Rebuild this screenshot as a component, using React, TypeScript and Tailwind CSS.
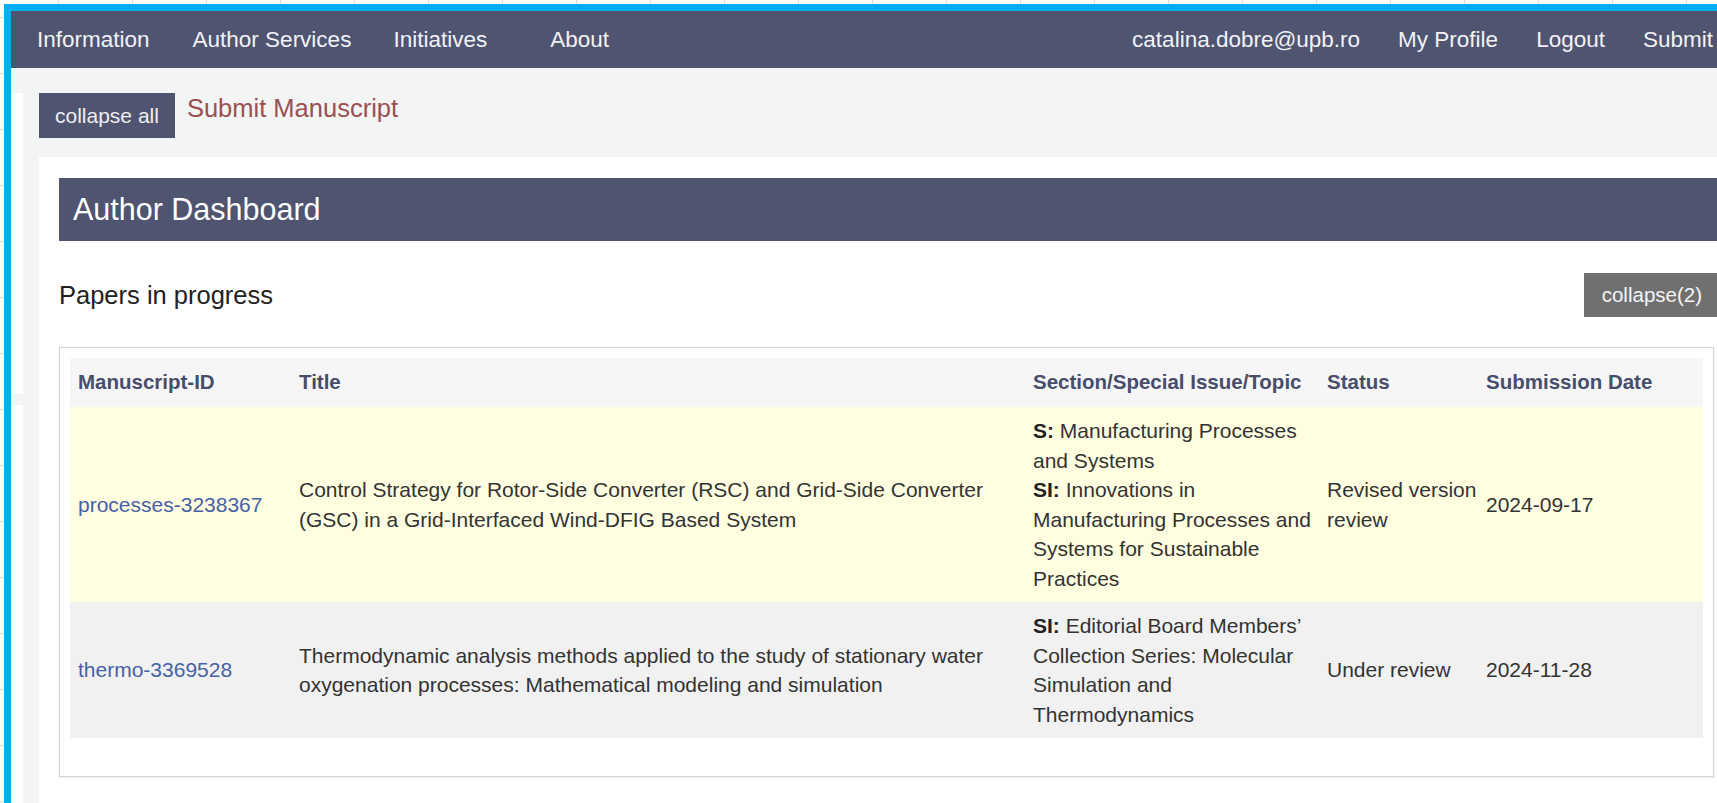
import { FC } from 'react'

const leftLinks = [
  { label: 'Information', cls: '' },
  { label: 'Author Services', cls: 'ml-[43px]' },
  { label: 'Initiatives', cls: 'ml-[42px]' },
  { label: 'About', cls: 'ml-[63px]' },
]

const rightLinks = ['catalina.dobre@upb.ro', 'My Profile', 'Logout', 'Submit']

type Section = { tag: string; lines: string[] }

type Paper = {
  id: string
  title: string[]
  sections: Section[]
  status: string[]
  date: string
  rowBg: string
}

// papers currently in the editorial pipeline
const papers: Paper[] = [
  {
    id: 'processes-3238367',
    title: [
      'Control Strategy for Rotor-Side Converter (RSC) and Grid-Side Converter',
      '(GSC) in a Grid-Interfaced Wind-DFIG Based System',
    ],
    sections: [
      { tag: 'S:', lines: ['Manufacturing Processes', 'and Systems'] },
      { tag: 'SI:', lines: ['Innovations in', 'Manufacturing Processes and', 'Systems for Sustainable', 'Practices'] },
    ],
    status: ['Revised version', 'review'],
    date: '2024-09-17',
    rowBg: 'bg-[#fffee1]',
  },
  {
    id: 'thermo-3369528',
    title: [
      'Thermodynamic analysis methods applied to the study of stationary water',
      'oxygenation processes: Mathematical modeling and simulation',
    ],
    sections: [
      {
        tag: 'SI:',
        lines: ['Editorial Board Members\u2019', 'Collection Series: Molecular', 'Simulation and', 'Thermodynamics'],
      },
    ],
    status: ['Under review'],
    date: '2024-11-28',
    rowBg: 'bg-[#f1f1f1]',
  },
]

const headers = ['Manuscript-ID', 'Title', 'Section/Special Issue/Topic', 'Status', 'Submission Date']

const App: FC = () => {
  return (
    <div className="relative h-[803px] w-[1717px] overflow-hidden bg-white font-['Liberation_Sans',Arial,sans-serif] [background-image:linear-gradient(to_right,#dadada_1px,transparent_1px),linear-gradient(to_bottom,#dadada_1px,transparent_1px)] [background-size:74px_56px] [background-position:58px_17px]">
      <div className="ml-[4px] mt-[4px] h-[799px] w-[1713px] border-l-[7px] border-t-[7px] border-[#05aef0] bg-[#f3f4f4]">
        {/* top navigation */}
        <nav className="flex h-[57px] items-center justify-between bg-[#4f5470] text-[22.5px] text-[#f2f2f6]">
          <div className="flex items-center pl-[26px]">
            {leftLinks.map((link) => (
              <a key={link.label} className={link.cls}>
                {link.label}
              </a>
            ))}
          </div>
          <div className="flex items-center gap-[38px] pr-[4px]">
            {rightLinks.map((link) => (
              <a key={link}>{link}</a>
            ))}
          </div>
        </nav>

        <div className="flex">
          {/* collapsed sidebar edge */}
          <aside className="flex w-[12px] shrink-0 flex-col gap-[11px] pt-[25px]">
            <div className="h-[301px] bg-white" />
            <div className="h-[400px] bg-white" />
          </aside>

          <main className="pl-[16px] pt-[25px]">
            <div className="flex items-start">
              <button className="h-[45px] bg-[#4f5470] px-[16px] text-[21px] text-[#eeeef3]">collapse all</button>
              <a className="ml-[12px] mt-[1px] text-[25.5px] leading-[29px] text-[#9a5050]">Submit Manuscript</a>
            </div>

            <section className="mt-[19px] w-[1695px] bg-white px-[20px] pb-[40px] pt-[21px]">
              <div className="-mr-[6px] flex h-[63px] items-center bg-[#4f5470] pl-[14px] text-[30.5px] text-white">
                Author Dashboard
              </div>

              <div className="mt-[32px] flex h-[44px] items-center justify-between">
                <h2 className="text-[25.5px] text-[#222]">Papers in progress</h2>
                <button className="-mr-[6px] h-[44px] bg-[#707070] px-[18px] text-[20.5px] text-[#f4f4f4]">
                  collapse(2)
                </button>
              </div>

              <div className="mt-[30px] border border-[#d3d3d3] px-[10px] pb-[38px] pt-[10px] shadow-[0_1px_2px_rgba(0,0,0,0.08)]">
                <table className="w-full table-fixed border-collapse">
                  <colgroup>
                    <col className="w-[221px]" />
                    <col className="w-[734px]" />
                    <col className="w-[294px]" />
                    <col className="w-[159px]" />
                    <col />
                  </colgroup>
                  <thead>
                    <tr className="bg-[#f6f6f6]">
                      {headers.map((h) => (
                        <th
                          key={h}
                          className="h-[49px] px-[8px] text-left align-middle text-[20.5px] font-bold text-[#474d6b]"
                        >
                          {h}
                        </th>
                      ))}
                    </tr>
                  </thead>
                  <tbody>
                    {papers.map((p) => (
                      <tr key={p.id} className={p.rowBg}>
                        <td className="px-[8px] py-[9px] align-middle text-[21px] leading-[29.5px] text-[#4661a6]">
                          <a>{p.id}</a>
                        </td>
                        <td className="px-[8px] py-[9px] align-middle text-[21px] leading-[29.5px] text-[#333]">
                          {p.title.map((line) => (
                            <div key={line} className="whitespace-nowrap">
                              {line}
                            </div>
                          ))}
                        </td>
                        <td className="px-[8px] py-[9px] align-middle text-[21px] leading-[29.5px] text-[#333]">
                          {p.sections.map((s) =>
                            s.lines.map((line, i) => (
                              <div key={s.tag + line} className="whitespace-nowrap">
                                {i === 0 ? <b className="text-[#222]">{s.tag} </b> : null}
                                {line}
                              </div>
                            ))
                          )}
                        </td>
                        <td className="px-[8px] py-[9px] align-middle text-[21px] leading-[29.5px] text-[#333]">
                          {p.status.map((line) => (
                            <div key={line} className="whitespace-nowrap">
                              {line}
                            </div>
                          ))}
                        </td>
                        <td className="px-[8px] py-[9px] align-middle text-[21px] leading-[29.5px] text-[#333]">
                          {p.date}
                        </td>
                      </tr>
                    ))}
                  </tbody>
                </table>
              </div>
            </section>
          </main>
        </div>
      </div>
    </div>
  )
}

export default App
